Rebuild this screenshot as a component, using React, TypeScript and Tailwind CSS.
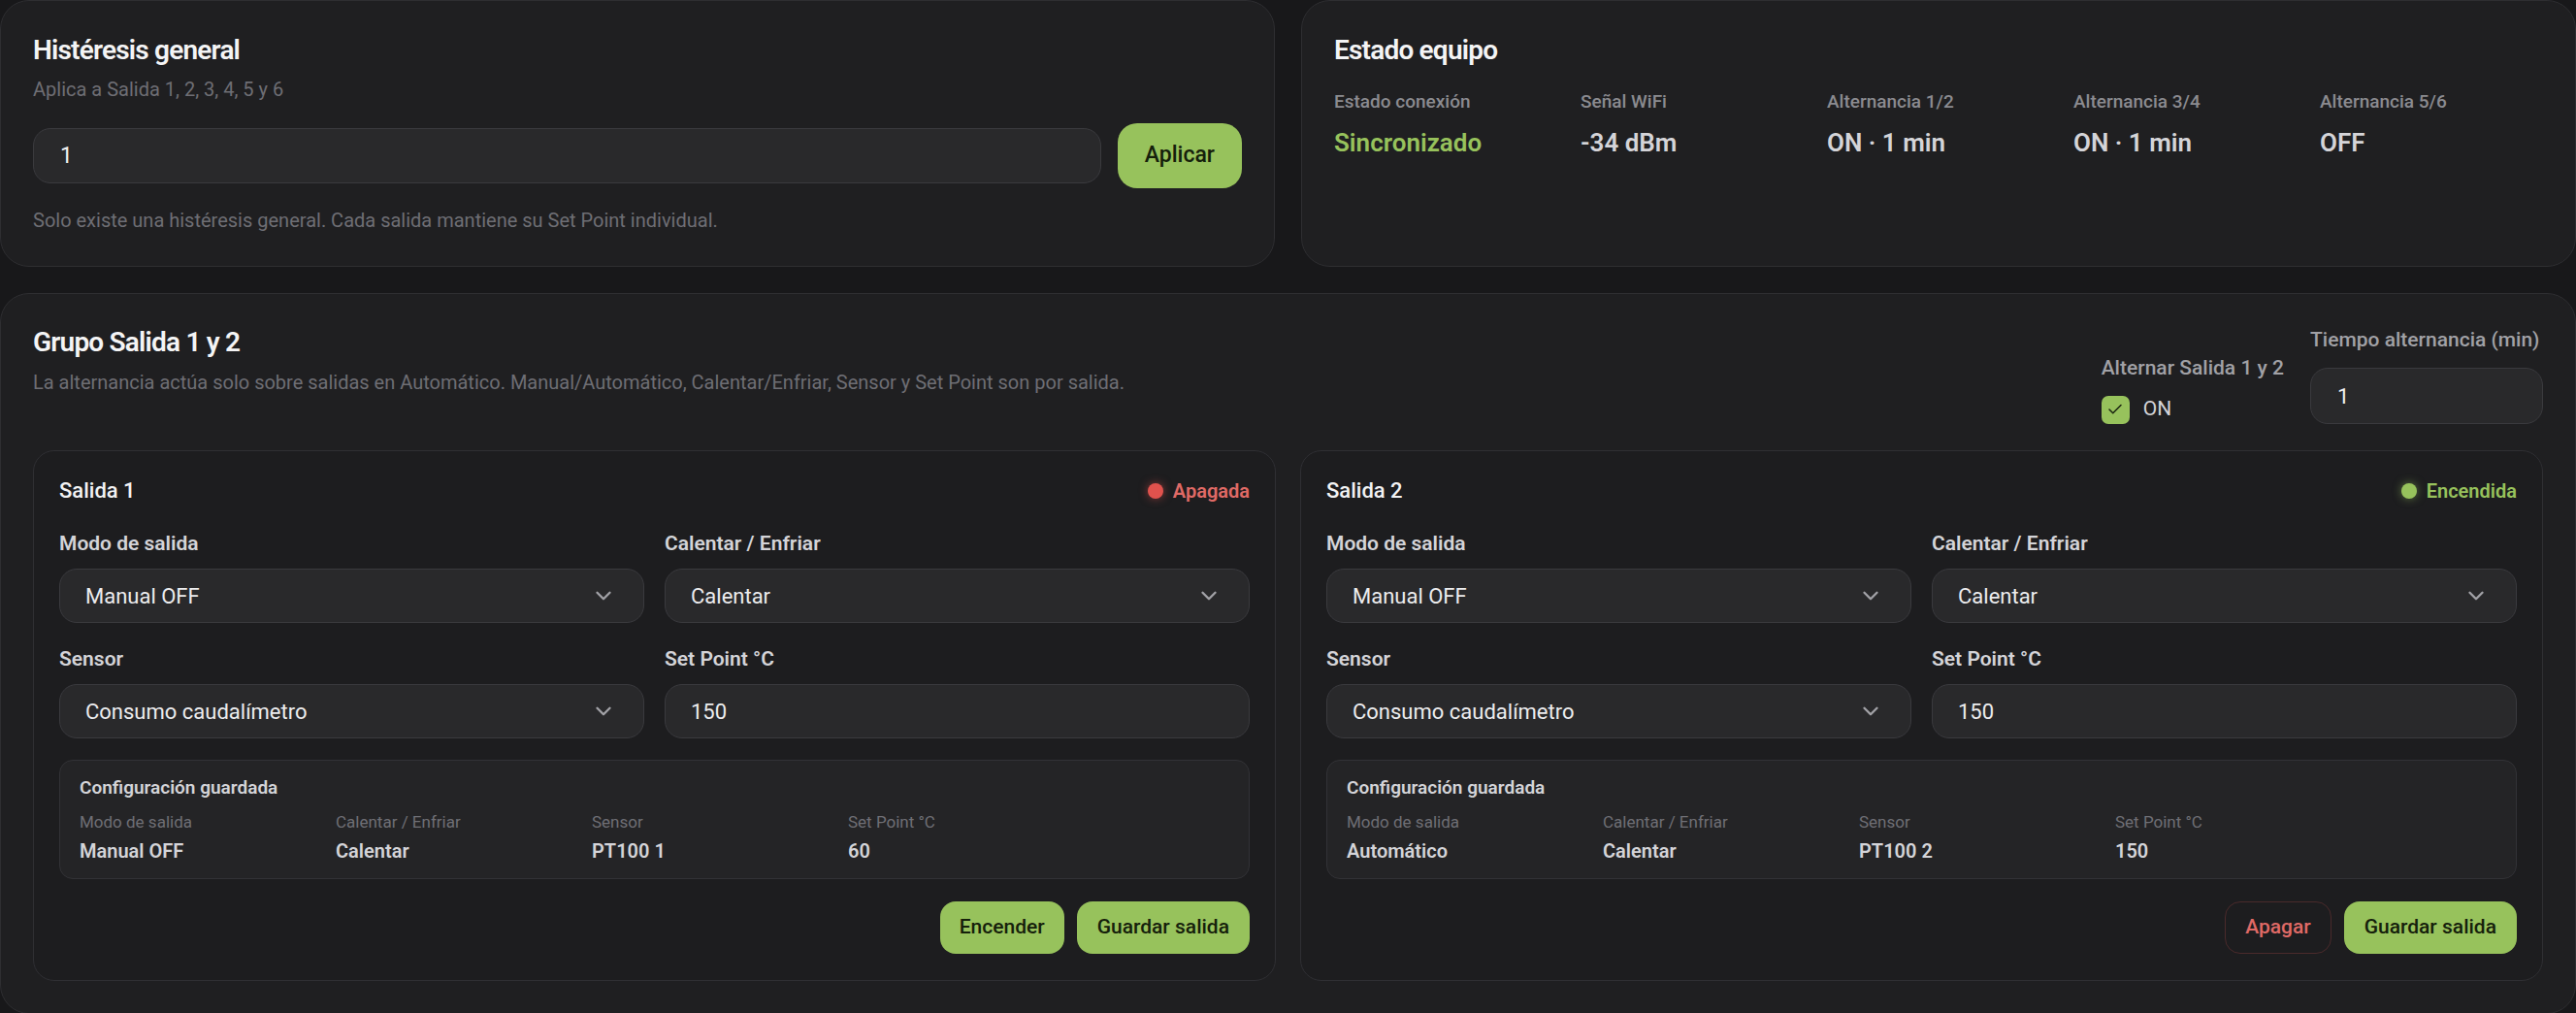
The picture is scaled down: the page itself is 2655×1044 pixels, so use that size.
import { Check, ChevronDown } from 'lucide-react'

interface SalidaProps {
  name: string
  on: boolean
  saved: { modo: string; modoCalor: string; sensor: string; setPoint: string }
}

const estado = [
  { label: 'Estado conexión', value: 'Sincronizado', green: true },
  { label: 'Señal WiFi', value: '-34 dBm' },
  { label: 'Alternancia 1/2', value: 'ON · 1 min' },
  { label: 'Alternancia 3/4', value: 'ON · 1 min' },
  { label: 'Alternancia 5/6', value: 'OFF' },
]

function Field({ label, children }: { label: string; children: React.ReactNode }) {
  return (
    <div className="flex flex-col gap-[12px]">
      <label className="text-[21px] leading-[28px] font-semibold text-[#d4d4d8]">{label}</label>
      {children}
    </div>
  )
}

function FakeSelect({ value }: { value: string }) {
  return (
    <div className="flex h-[56px] items-center justify-between rounded-[18px] border border-[#3a3a3e] bg-[#29292b] pl-[26px] pr-[28px] text-[22px] text-[#ececee]">
      <span>{value}</span>
      <ChevronDown size={26} strokeWidth={2.2} className="text-[#a1a1a6]" />
    </div>
  )
}

function Salida({ name, on, saved }: SalidaProps) {
  return (
    <div className="flex flex-col rounded-[22px] border border-[#2f2f33] bg-[#1d1d1f] px-[26px] pt-[26px] pb-[27px]">
      {/* Header */}
      <div className="flex items-center justify-between">
        <span className="text-[22px] leading-[30px] font-medium text-[#f2f2f3]">{name}</span>
        {on ? (
          <span className="flex items-center gap-[10px] text-[20px] font-semibold text-[#97c25c]">
            <span className="h-[16px] w-[16px] rounded-full bg-[#97c25c] shadow-[0_0_10px_rgba(151,194,92,0.55)]" />
            Encendida
          </span>
        ) : (
          <span className="flex items-center gap-[10px] text-[20px] font-semibold text-[#e06a66]">
            <span className="h-[16px] w-[16px] rounded-full bg-[#e0524d] shadow-[0_0_10px_rgba(224,82,77,0.55)]" />
            Apagada
          </span>
        )}
      </div>

      {/* Fields */}
      <div className="mt-[25px] grid grid-cols-2 gap-x-[21px] gap-y-[23px]">
        <Field label="Modo de salida">
          <FakeSelect value="Manual OFF" />
        </Field>
        <Field label="Calentar / Enfriar">
          <FakeSelect value="Calentar" />
        </Field>
        <Field label="Sensor">
          <FakeSelect value="Consumo caudalímetro" />
        </Field>
        <Field label="Set Point °C">
          <input
            type="text"
            defaultValue="150"
            className="h-[56px] w-full rounded-[18px] border border-[#3a3a3e] bg-[#29292b] px-[26px] text-[22px] text-[#ececee] outline-none"
          />
        </Field>
      </div>

      {/* Saved config */}
      <div className="mt-[22px] rounded-[14px] border border-[#323236] bg-[#242426] px-[20px] pt-[15px] pb-[15px]">
        <div className="text-[19px] leading-[26px] font-semibold text-[#d4d4d8]">Configuración guardada</div>
        <div className="mt-[11px] grid grid-cols-[repeat(4,244px)] gap-x-[20px]">
          {[
            ['Modo de salida', saved.modo],
            ['Calentar / Enfriar', saved.modoCalor],
            ['Sensor', saved.sensor],
            ['Set Point °C', saved.setPoint],
          ].map(([l, v]) => (
            <div key={l} className="flex flex-col gap-[6px]">
              <span className="text-[17px] leading-[22px] text-[#6f6f75]">{l}</span>
              <span className="text-[20px] leading-[26px] font-semibold text-[#d4d4d8]">{v}</span>
            </div>
          ))}
        </div>
      </div>

      {/* Actions */}
      <div className="mt-[23px] flex justify-end gap-[13px]">
        {on ? (
          <button className="h-[54px] rounded-[16px] border border-[#4a2a2b] px-[20px] text-[21px] font-medium text-[#e06a66]">
            Apagar
          </button>
        ) : (
          <button className="h-[54px] rounded-[16px] bg-[#97c25c] px-[20px] text-[21px] font-medium text-[#15200b]">
            Encender
          </button>
        )}
        <button className="h-[54px] rounded-[16px] bg-[#97c25c] px-[21px] text-[21px] font-medium text-[#15200b]">
          Guardar salida
        </button>
      </div>
    </div>
  )
}

export default function App() {
  return (
    <div className="min-h-screen bg-[#18181a] font-['Roboto','Liberation_Sans',sans-serif]">
      <div className="flex flex-col gap-[27px]">
        {/* Top row */}
        <div className="grid grid-cols-2 gap-[27px]">
          {/* Histéresis */}
          <div className="rounded-[30px] border border-[#2e2e31] bg-[#1f1f21] px-[33px] pt-[34px] pb-[34px]">
            <h2 className="text-[28px] leading-[34px] font-semibold tracking-[-0.8px] text-[#f4f4f5]">
              Histéresis general
            </h2>
            <p className="mt-[10px] text-[20px] leading-[26px] text-[#6e6e74]">Aplica a Salida 1, 2, 3, 4, 5 y 6</p>
            <div className="mt-[22px] flex items-center gap-[17px]">
              <input
                type="text"
                defaultValue="1"
                className="h-[57px] min-w-0 flex-1 rounded-[18px] border border-[#3a3a3e] bg-[#29292b] px-[27px] text-[23px] text-[#f0f0f1] outline-none"
              />
              <button className="h-[67px] rounded-[20px] bg-[#97c25c] px-[28px] text-[23px] font-medium text-[#15200b]">
                Aplicar
              </button>
            </div>
            <p className="mt-[20px] text-[20px] leading-[26px] text-[#6e6e74]">
              Solo existe una histéresis general. Cada salida mantiene su Set Point individual.
            </p>
          </div>

          {/* Estado equipo */}
          <div className="rounded-[30px] border border-[#2e2e31] bg-[#1f1f21] px-[33px] pt-[34px] pb-[34px]">
            <h2 className="text-[28px] leading-[34px] font-semibold tracking-[-0.8px] text-[#f4f4f5]">
              Estado equipo
            </h2>
            <div className="mt-[23px] grid grid-cols-5 gap-6">
              {estado.map((e) => (
                <div key={e.label} className="flex flex-col gap-[13px]">
                  <span className="text-[19px] leading-[26px] font-medium text-[#8b8b90]">{e.label}</span>
                  <span
                    className={
                      e.green
                        ? 'text-[26px] leading-[32px] font-semibold text-[#97c25c]'
                        : 'text-[26px] leading-[32px] font-semibold text-[#d4d4d8]'
                    }
                  >
                    {e.value}
                  </span>
                </div>
              ))}
            </div>
          </div>
        </div>

        {/* Grupo Salida 1 y 2 */}
        <div className="rounded-[30px] border border-[#2e2e31] bg-[#1f1f21] px-[33px] pt-[33px] pb-[33px]">
          <div className="flex items-start justify-between">
            <div>
              <h2 className="text-[28px] leading-[34px] font-semibold tracking-[-0.8px] text-[#f4f4f5]">
                Grupo Salida 1 y 2
              </h2>
              <p className="mt-[11px] text-[20px] leading-[26px] text-[#6e6e74]">
                La alternancia actúa solo sobre salidas en Automático. Manual/Automático, Calentar/Enfriar, Sensor y
                Set Point son por salida.
              </p>
            </div>
            <div className="flex items-end gap-[27px]">
              <div className="flex flex-col gap-[14px]">
                <span className="text-[21px] leading-[28px] font-medium text-[#a1a1a6]">Alternar Salida 1 y 2</span>
                <label className="flex h-[30px] items-center gap-[14px]">
                  <span className="flex h-[29px] w-[29px] items-center justify-center rounded-[7px] bg-[#97c25c]">
                    <Check size={18} strokeWidth={2} className="text-[#1a2410]" />
                  </span>
                  <span className="text-[21px] text-[#d4d4d8]">ON</span>
                </label>
              </div>
              <div className="flex flex-col gap-[15px]">
                <span className="text-[21px] leading-[28px] font-medium text-[#a1a1a6]">Tiempo alternancia (min)</span>
                <input
                  type="text"
                  defaultValue="1"
                  className="h-[58px] w-[240px] rounded-[18px] border border-[#3a3a3e] bg-[#29292b] px-[27px] text-[22px] text-[#f0f0f1] outline-none"
                />
              </div>
            </div>
          </div>

          <div className="mt-[27px] grid grid-cols-2 gap-[25px]">
            <Salida
              name="Salida 1"
              on={false}
              saved={{ modo: 'Manual OFF', modoCalor: 'Calentar', sensor: 'PT100 1', setPoint: '60' }}
            />
            <Salida
              name="Salida 2"
              on={true}
              saved={{ modo: 'Automático', modoCalor: 'Calentar', sensor: 'PT100 2', setPoint: '150' }}
            />
          </div>
        </div>
      </div>
    </div>
  )
}
